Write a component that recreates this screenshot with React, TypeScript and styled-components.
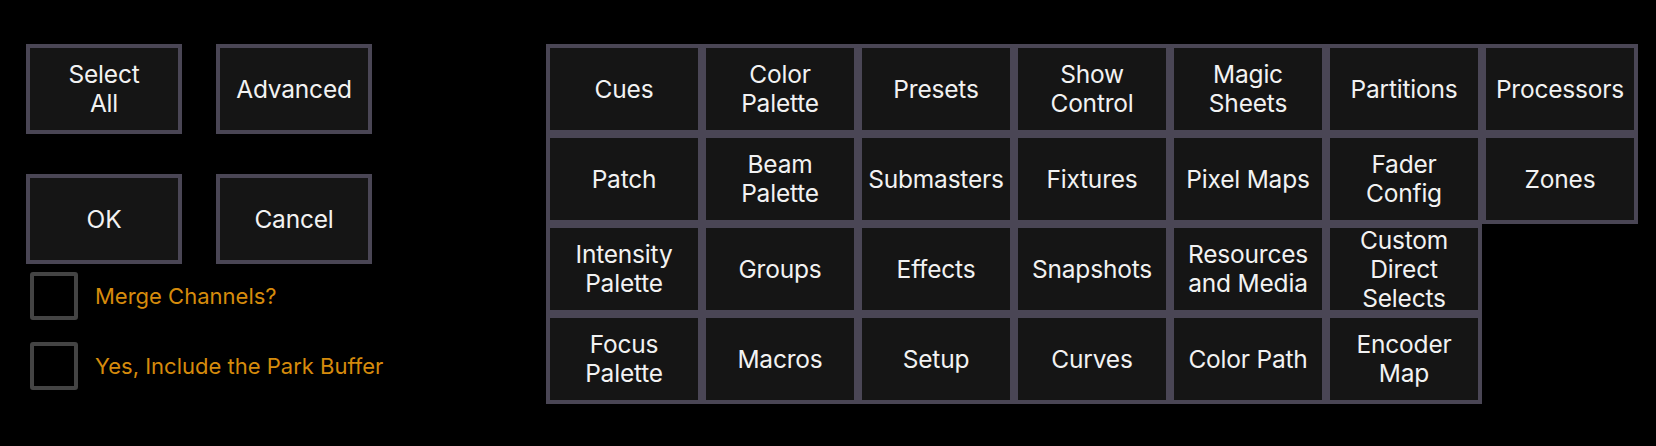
import React from "react";
import styled, { createGlobalStyle } from "styled-components";

const GlobalStyle = createGlobalStyle`
  html, body {
    margin: 0;
    padding: 0;
    background: #000;
  }
  body {
    font-family: Inter, "Noto Sans", "DejaVu Sans", sans-serif;
    -webkit-font-smoothing: antialiased;
  }
`;

const Page = styled.div`
  width: 1656px;
  height: 446px;
  background: #000;
  display: flex;
  align-items: flex-start;
  padding: 44px 0 0 26px;
  box-sizing: border-box;
  gap: 174px;
`;

const LeftPanel = styled.div`
  display: flex;
  flex-direction: column;
  width: 346px;
  flex-shrink: 0;
`;

const ButtonGrid = styled.div`
  display: grid;
  grid-template-columns: 156px 156px;
  column-gap: 34px;
  row-gap: 40px;
`;

const Tile = styled.button`
  box-sizing: border-box;
  width: 156px;
  height: 90px;
  border: 4px solid #4a4655;
  background: #151515;
  color: #f2f2f2;
  font-family: Inter, "Noto Sans", sans-serif;
  font-size: 24.5px;
  line-height: 29px;
  letter-spacing: -0.2px;
  text-align: center;
  display: flex;
  align-items: center;
  justify-content: center;
  padding: 0 2px;
  margin: 0;
  overflow: hidden;
  white-space: pre-line;
  cursor: pointer;
`;

const CheckList = styled.div`
  display: flex;
  flex-direction: column;
  gap: 22px;
  margin-top: 8px;
  padding-left: 4px;
`;

const CheckRow = styled.label`
  display: flex;
  align-items: center;
  gap: 17px;
  cursor: pointer;
`;

const Box = styled.span`
  box-sizing: border-box;
  width: 48px;
  height: 48px;
  border: 4px solid #444444;
  border-radius: 3px;
  background: #000;
  flex-shrink: 0;
`;

const CheckLabel = styled.span`
  color: #d68b0c;
  font-size: 22px;
  white-space: nowrap;
  font-family: Inter, "Noto Sans", sans-serif;
`;

const TabGrid = styled.div`
  display: grid;
  grid-template-columns: repeat(7, 156px);
  grid-auto-rows: 90px;
`;

const tabs = [
  "Cues",
  "Color\nPalette",
  "Presets",
  "Show\nControl",
  "Magic\nSheets",
  "Partitions",
  "Processors",
  "Patch",
  "Beam\nPalette",
  "Submasters",
  "Fixtures",
  "Pixel Maps",
  "Fader\nConfig",
  "Zones",
  "Intensity\nPalette",
  "Groups",
  "Effects",
  "Snapshots",
  "Resources\nand Media",
  "Custom\nDirect\nSelects",
  null,
  "Focus\nPalette",
  "Macros",
  "Setup",
  "Curves",
  "Color Path",
  "Encoder\nMap",
  null,
];

export default function App() {
  return (
    <>
      <GlobalStyle />
      <Page>
        <LeftPanel>
          <ButtonGrid>
            <Tile>{"Select\nAll"}</Tile>
            <Tile>Advanced</Tile>
            <Tile>OK</Tile>
            <Tile>Cancel</Tile>
          </ButtonGrid>
          <CheckList>
            <CheckRow>
              <Box />
              <CheckLabel>Merge Channels?</CheckLabel>
            </CheckRow>
            <CheckRow>
              <Box />
              <CheckLabel>Yes, Include the Park Buffer</CheckLabel>
            </CheckRow>
          </CheckList>
        </LeftPanel>
        <TabGrid>
          {tabs.map((t, i) => (t ? <Tile key={i}>{t}</Tile> : <span key={i} />))}
        </TabGrid>
      </Page>
    </>
  );
}
